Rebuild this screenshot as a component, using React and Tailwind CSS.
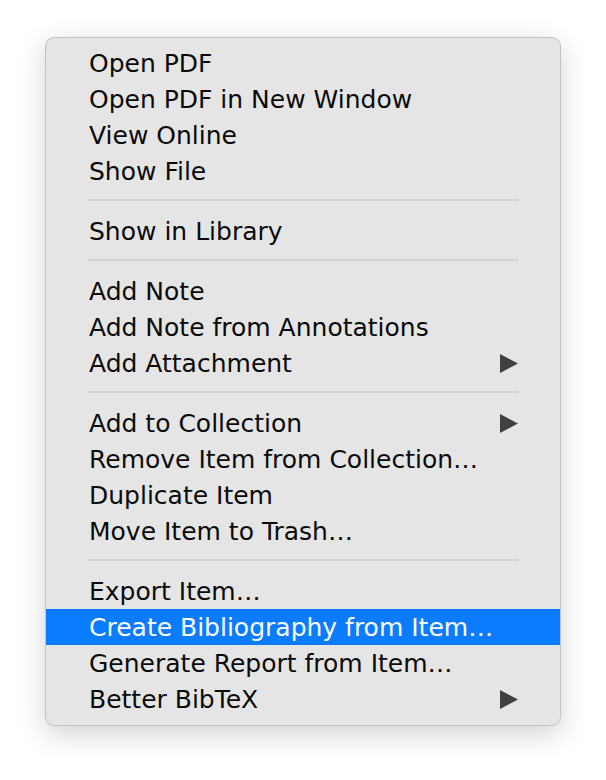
import React from "react";

const sections = [
    [
        { label: "Open PDF" },
        { label: "Open PDF in New Window" },
        { label: "View Online" },
        { label: "Show File" },
    ],
    [{ label: "Show in Library" }],
    [
        { label: "Add Note" },
        { label: "Add Note from Annotations" },
        { label: "Add Attachment", submenu: true },
    ],
    [
        { label: "Add to Collection", submenu: true },
        { label: "Remove Item from Collection…" },
        { label: "Duplicate Item" },
        { label: "Move Item to Trash…" },
    ],
    [
        { label: "Export Item…" },
        { label: "Create Bibliography from Item…", active: true },
        { label: "Generate Report from Item…" },
        { label: "Better BibTeX", submenu: true },
    ],
];

const Arrow = ({ active }) => (
    <svg width="18" height="19" viewBox="0 0 18 19" className="shrink-0">
        <polygon points="0,0 18,9.5 0,19" fill={active ? "#ffffff" : "#404040"} />
    </svg>
);

const MenuItem = ({ label, submenu, active }) => (
    <div
        className={`flex items-center justify-between h-[36px] pl-[43px] pr-[42px] ${
            active ? "bg-[#0b7bff] text-white" : "text-[#0a0a0a]"
        }`}
    >
        <span className="whitespace-nowrap">{label}</span>
        {submenu && <Arrow active={active} />}
    </div>
);

export default function App() {
    return (
        <div className="min-h-[780px] bg-white pt-[37px] pl-[45px]">
            <div
                className="w-[516px] rounded-[9px] border border-[#c3c3c3] bg-[#e5e5e5] pt-[7px] pb-[8px] shadow-[0_8px_28px_rgba(0,0,0,0.18)] overflow-hidden text-[25px] leading-none"
                style={{ fontFamily: '"DejaVu Sans", "Lucida Grande", sans-serif' }}
            >
                {sections.map((items, i) => (
                    <div key={i}>
                        {i > 0 && (
                            <div className="pt-[10px] pb-[12px] px-[42px]">
                                <div className="h-[2px] bg-[#d2d2d2]" />
                            </div>
                        )}
                        {items.map((it) => (
                            <MenuItem key={it.label} {...it} />
                        ))}
                    </div>
                ))}
            </div>
        </div>
    );
}
